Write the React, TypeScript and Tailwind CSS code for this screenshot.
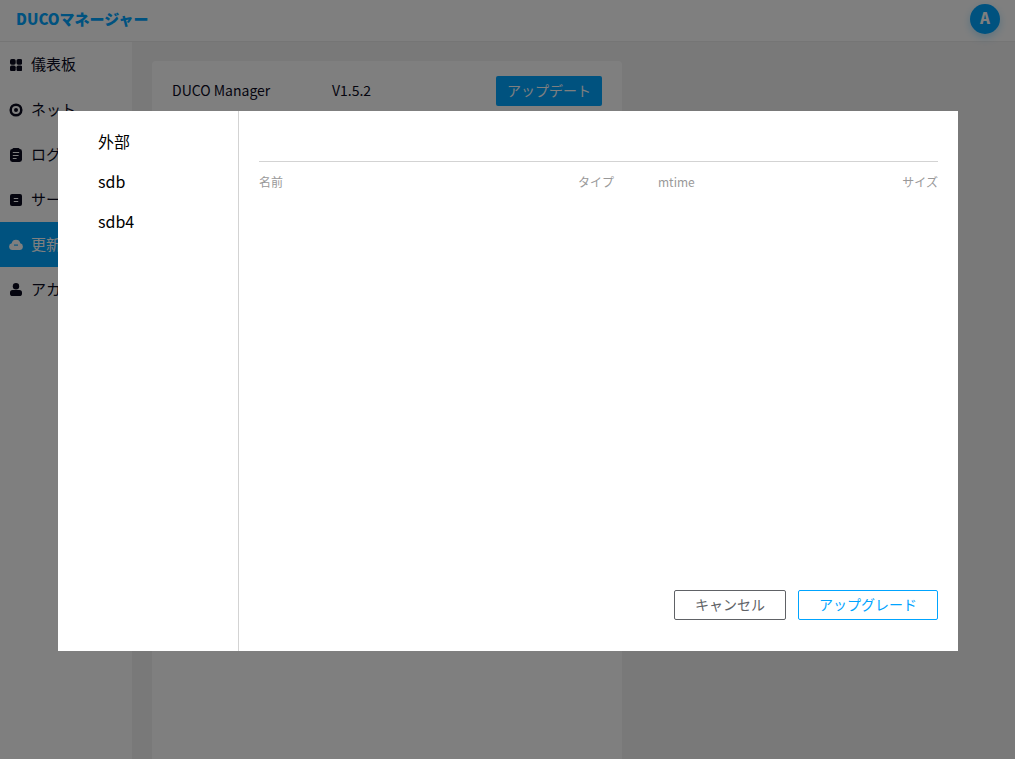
import type { ReactNode } from "react";

function GridIcon() {
  return (
    <svg className="h-3 w-3" viewBox="0 0 12 12" fill="currentColor">
      <rect x="0" y="0" width="5.7" height="5.7" rx="1.7" />
      <rect x="6.5" y="0" width="5.7" height="5.7" rx="1.7" />
      <rect x="0" y="6.5" width="5.7" height="5.7" rx="1.7" />
      <rect x="6.5" y="6.5" width="5.7" height="5.7" rx="1.7" />
    </svg>
  );
}

function NetworkIcon() {
  return (
    <svg className="h-[14px] w-[14px]" viewBox="0 0 14 14">
      <circle cx="7" cy="7" r="5.3" fill="none" stroke="currentColor" strokeWidth="2.5" />
      <circle cx="7" cy="7" r="2" fill="currentColor" />
    </svg>
  );
}

function LogIcon() {
  return (
    <svg className="h-[14px] w-3" viewBox="0 0 12 14">
      <rect x="2.5" y="0" width="7" height="4" rx="1" fill="currentColor" />
      <rect x="0" y="1" width="12" height="13" rx="2.4" fill="currentColor" />
      <path d="M3.2 4.5h5.6M3.2 7.5h5M3.2 10.5h3" stroke="#fff" strokeWidth="1" strokeLinecap="round" />
    </svg>
  );
}

function ServiceIcon() {
  return (
    <svg className="h-3 w-3" viewBox="0 0 12 12">
      <rect width="12" height="12" rx="2" fill="currentColor" />
      <path d="M4.2 4.5h3.6M4.2 7.5h3.6" stroke="#fff" strokeWidth="1.1" strokeLinecap="round" />
    </svg>
  );
}

function CloudIcon() {
  return (
    <svg className="h-[11px] w-[14px]" viewBox="0 0 14 11">
      <path
        d="M3.4 11A3.4 3.4 0 0 1 2.7 4.3a4.4 4.4 0 0 1 8.6 0A3.4 3.4 0 0 1 10.6 11Z"
        fill="currentColor"
      />
      <path d="M5 6.1h4" stroke="#00a4ff" strokeWidth="1.1" />
    </svg>
  );
}

function UserIcon() {
  return (
    <svg className="h-[13px] w-3" viewBox="0 0 12 13" fill="currentColor">
      <circle cx="6" cy="3.2" r="3.2" />
      <rect x="0" y="7" width="12" height="6" rx="2.6" />
    </svg>
  );
}

type NavItem = { id: string; label: string; icon: ReactNode };

const navItems: NavItem[] = [
  { id: "dashboard", label: "儀表板", icon: <GridIcon /> },
  { id: "network", label: "ネット", icon: <NetworkIcon /> },
  { id: "log", label: "ログ", icon: <LogIcon /> },
  { id: "service", label: "サービス", icon: <ServiceIcon /> },
  { id: "update", label: "更新", icon: <CloudIcon /> },
  { id: "account", label: "アカウント", icon: <UserIcon /> },
];

const drives = ["外部", "sdb", "sdb4"];

function Sidebar({ active }: { active: string }) {
  return (
    <nav className="w-[132px] shrink-0 bg-white">
      {navItems.map((item) => (
        <a
          key={item.id}
          className={`flex h-[45px] items-center text-[15px] whitespace-nowrap ${
            active === item.id ? "bg-[#00a4ff] text-white" : "text-[#0b0b1e]"
          }`}
        >
          <span className="flex w-[31px] justify-center pl-px">{item.icon}</span>
          {item.label}
        </a>
      ))}
    </nav>
  );
}

function FileDialog() {
  return (
    <div className="fixed inset-0 z-50 flex items-center justify-center bg-black/50">
      <div className="mt-[3px] mr-[-1px] flex h-[540px] w-[900px] bg-white">
        <ul className="w-[181px] shrink-0 border-r border-[#d3d3d3] pt-[10px] pl-10 text-base text-black">
          {drives.map((drive) => (
            <li key={drive} className="flex h-10 items-center">
              {drive}
            </li>
          ))}
        </ul>
        <div className="flex flex-1 flex-col px-5 pb-[31px]">
          <div className="h-[51px] border-b border-[#d3d3d3]" />
          <div className="flex h-10 items-center text-xs text-[#999]">
            <span className="w-[319px]">名前</span>
            <span className="w-20">タイプ</span>
            <span className="flex-1">mtime</span>
            <span>サイズ</span>
          </div>
          <div className="mt-auto flex justify-end gap-3 text-sm">
            <button className="h-[30px] w-28 rounded-[2px] border border-[#606266] pb-0.5 text-[#606266]">
              キャンセル
            </button>
            <button className="h-[30px] w-[140px] rounded-[2px] border border-[#00a4ff] pb-0.5 text-[#00a4ff]">
              アップグレード
            </button>
          </div>
        </div>
      </div>
    </div>
  );
}

export default function App() {
  return (
    <div className="flex h-screen flex-col overflow-hidden bg-[#f2f2f2] font-['Noto_Sans_CJK_SC',sans-serif]">
      <header className="flex h-[42px] shrink-0 items-center justify-between border-b border-[#ebebeb] bg-white pr-[15px] pb-[3px] pl-4">
        <h1 className="text-[15px] font-black text-[#00a4ff]">DUCOマネージャー</h1>
        <div className="flex h-[30px] w-[30px] items-center justify-center rounded-full bg-[#00a4ff] pb-px text-[15px] font-black text-white shadow-[0_3px_8px_rgba(0,164,255,0.3)]">
          A
        </div>
      </header>
      <div className="flex min-h-0 flex-1">
        <Sidebar active="update" />
        <main className="flex-1 px-5 pt-[19px]">
          <section className="h-full w-[470px] rounded-t bg-white px-5 pt-[15px]">
            <div className="flex h-[30px] items-center text-sm text-[#0b0b1e]">
              <span className="w-40 pb-0.5">DUCO Manager</span>
              <span className="pb-0.5">V1.5.2</span>
              <button className="ml-auto h-[30px] w-[106px] rounded-[2px] bg-[#00a4ff] pb-0.5 text-white">
                アップデート
              </button>
            </div>
          </section>
        </main>
      </div>
      <FileDialog />
    </div>
  );
}
